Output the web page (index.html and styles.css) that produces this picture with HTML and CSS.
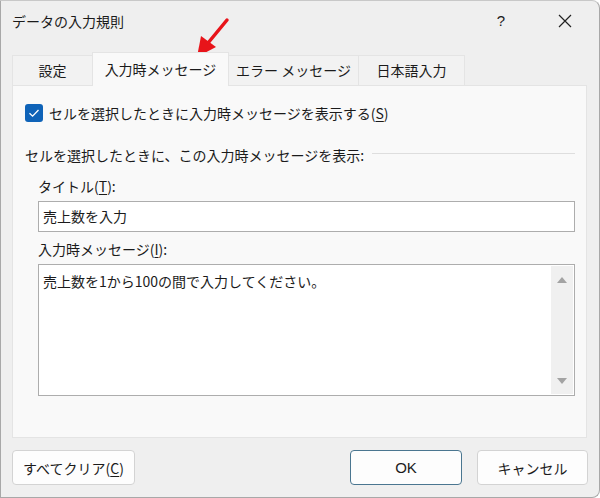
FILE: index.html
```html
<!DOCTYPE html>
<html lang="ja">
<head>
    <meta charset="UTF-8">
    <title>データの入力規則</title>
    <link rel="stylesheet" href="styles.css">
</head>
<body>
    <div class="dialog">
        <div class="titlebar">
            <span class="title">データの入力規則</span>
            <span class="help">?</span>
            <svg class="close" width="14" height="14" viewBox="0 0 14 14">
                <path d="M1 1 L13 13 M13 1 L1 13" stroke="#222" stroke-width="1.2" fill="none"/>
            </svg>
        </div>

        <div class="tabs">
            <div class="tab tab-1">設定</div>
            <div class="tab tab-2 active">入力時メッセージ</div>
            <div class="tab tab-3">エラー メッセージ</div>
            <div class="tab tab-4">日本語入力</div>
        </div>

        <div class="panel">
            <div class="check-row">
                <span class="checkbox">
                    <svg width="18" height="18" viewBox="0 0 18 18">
                        <path d="M4.5 9.2 L7.6 12.2 L13.5 6" stroke="#fff" stroke-width="1.3" fill="none"/>
                    </svg>
                </span>
                <span>セルを選択したときに入力時メッセージを表示する(<u>S</u>)</span>
            </div>

            <div class="group-row">
                <span>セルを選択したときに、この入力時メッセージを表示:</span>
                <span class="group-line"></span>
            </div>

            <div class="field-label">タイトル(<u>T</u>):</div>
            <div class="textbox">売上数を入力</div>

            <div class="field-label label-msg">入力時メッセージ(<u>I</u>):</div>
            <div class="textarea">
                <div class="textarea-text">売上数を1から100の間で入力してください。</div>
                <div class="scrollbar">
                    <span class="arrow up"></span>
                    <span class="arrow down"></span>
                </div>
            </div>
        </div>

        <div class="footer">
            <button class="btn btn-clear">すべてクリア(<u>C</u>)</button>
            <span class="spacer"></span>
            <button class="btn btn-ok">OK</button>
            <button class="btn btn-cancel">キャンセル</button>
        </div>

        <svg class="pointer" width="60" height="60" viewBox="0 0 60 60">
            <path d="M44 5 L25 28" stroke="#e8141a" stroke-width="3.5" stroke-linecap="round" fill="none"/>
            <polygon points="14,42 18,21 33,32" fill="#e8141a"/>
        </svg>
    </div>
</body>
</html>
```

FILE: styles.css
```css
* {
    box-sizing: border-box;
}
body {
    margin: 0;
    font-family: "Noto Sans CJK JP", "Noto Sans", sans-serif;
    font-size: 14px;
    color: #1b1b1b;
    background-color: #ffffff;
}
u {
    text-decoration-thickness: 1px;
    text-underline-offset: 2px;
}
.dialog {
    position: relative;
    width: 600px;
    height: 498px;
    background-color: #efefef;
    border: 1px solid #a8a8a8;
    border-top-color: #c8c8c8;
    border-radius: 0 8px 8px 0;
    display: flex;
    flex-direction: column;
    overflow: hidden;
}
.titlebar {
    height: 39px;
    display: flex;
    align-items: center;
    padding-left: 11px;
}
.title {
    font-size: 14px;
    line-height: 20px;
}
.help {
    margin-left: auto;
    font-family: "Liberation Sans", sans-serif;
    font-size: 15px;
    margin-right: 53px;
}
.close {
    margin-right: 27px;
}
.tabs {
    display: flex;
    align-items: flex-end;
    margin-top: 12px;
    padding-left: 11px;
    height: 33px;
    position: relative;
    z-index: 1;
}
.tab {
    height: 30px;
    line-height: 28px;
    text-align: center;
    background-color: #f2f2f2;
    border: 1px solid #e4e4e4;
    border-bottom: none;
    margin-right: -1px;
}
.tab-1 { width: 81px; }
.tab-2 { width: 137px; }
.tab-3 { width: 131px; }
.tab-4 { width: 107px; }
.tab.active {
    height: 34px;
    line-height: 33px;
    background-color: #f9f9f9;
    margin-bottom: -1px;
}
.panel {
    margin: 0 12px 0 11px;
    height: 353px;
    background-color: #f9f9f9;
    border: 1px solid #e4e4e4;
    padding: 17px 11px 0 12px;
}
.check-row {
    display: flex;
    align-items: center;
    height: 20px;
    line-height: 20px;
}
.checkbox {
    width: 18px;
    height: 18px;
    border-radius: 3px;
    background-color: #0f63b8;
    margin-right: 6px;
    display: flex;
}
.group-row {
    display: flex;
    align-items: center;
    margin-top: 22px;
    height: 20px;
    line-height: 20px;
}
.group-line {
    flex: 1;
    height: 1px;
    background-color: #dedede;
    margin-left: 8px;
    margin-top: -3px;
}
.field-label {
    margin-top: 11px;
    margin-left: 13px;
    height: 20px;
    line-height: 20px;
}
.label-msg {
    margin-top: 7px;
}
.textbox {
    margin-top: 5px;
    margin-left: 13px;
    height: 31px;
    background-color: #ffffff;
    border: 1px solid #adadad;
    padding-left: 4px;
    line-height: 29px;
}
.textarea {
    margin-top: 5px;
    margin-left: 13px;
    height: 132px;
    background-color: #ffffff;
    border: 1px solid #adadad;
    display: flex;
    padding: 1px;
}
.textarea-text {
    flex: 1;
    padding: 4px 0 0 3px;
    line-height: 22px;
}
.scrollbar {
    width: 22px;
    background-color: #f0f0f0;
    position: relative;
}
.arrow {
    position: absolute;
    left: 6px;
    width: 0;
    height: 0;
    border-left: 5px solid transparent;
    border-right: 5px solid transparent;
}
.arrow.up {
    top: 11px;
    border-bottom: 6px solid #a3a3a3;
}
.arrow.down {
    bottom: 10px;
    border-top: 6px solid #a3a3a3;
}
.footer {
    display: flex;
    margin-top: 12px;
    padding: 0 11px 0 11px;
}
.spacer {
    flex: 1;
}
.btn {
    height: 35px;
    font-family: "Noto Sans CJK JP", "Noto Sans", sans-serif;
    font-size: 14px;
    color: #1b1b1b;
    background-color: #fdfdfd;
    border: 1px solid #d3d3d3;
    border-radius: 4px;
    padding: 0;
}
.btn-clear { width: 123px; }
.btn-ok {
    width: 112px;
    border-color: #4a7690;
    font-family: "Liberation Sans", sans-serif;
    font-size: 15px;
}
.btn-cancel {
    width: 111px;
    margin-left: 15px;
}
.pointer {
    position: absolute;
    left: 182px;
    top: 14px;
}
```
